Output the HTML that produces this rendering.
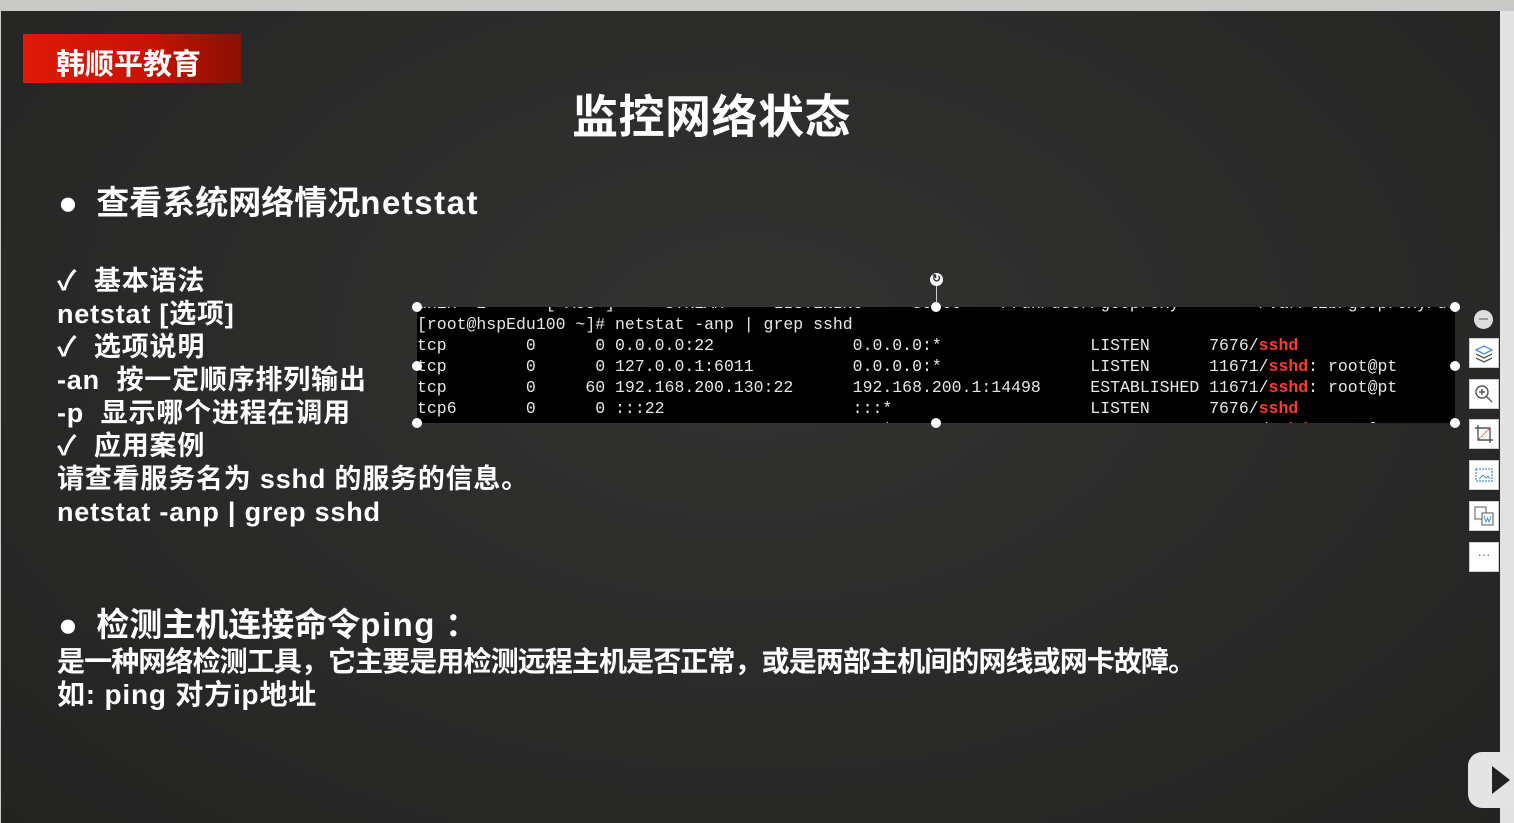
<!DOCTYPE html>
<html><head><meta charset="utf-8"><style>
*{margin:0;padding:0;box-sizing:border-box}
body{width:1514px;height:823px;overflow:hidden;background:#c9cac8;position:relative;font-family:"Liberation Sans","Noto Sans CJK SC",sans-serif;color:#fff;font-weight:bold}
#slide{position:absolute;left:1px;top:11px;width:1499px;height:812px;background:radial-gradient(ellipse at 50% 40%,#333332 0%,#2a2a29 55%,#232322 100%)}
#rs{position:absolute;left:1500px;top:11px;width:14px;height:812px;background:#e2e2e2}
.t{position:absolute;white-space:nowrap;line-height:1}
.l{letter-spacing:0.8px}
#logo{position:absolute;left:23px;top:34px;width:218px;height:49px;background:linear-gradient(90deg,#e01a06 0%,#c51304 60%,#8a1004 100%);font-size:29px;padding:7px 0 0 33px;letter-spacing:0px}
#term{position:absolute;left:417px;top:307px;width:1038px;height:116px;background:#000;font-family:"Liberation Mono",monospace;font-weight:normal;font-size:16.5px;color:#e8e8e8;overflow:hidden}
#term pre{font-family:inherit;position:absolute;left:0;top:7px;line-height:21px}
.r{color:#ff3b2a;font-weight:bold}
.h{position:absolute;width:10px;height:10px;border-radius:50%;background:#fff;}
.btn{position:absolute;left:1469px;width:30px;height:30px;background:#fff;border:1px solid #ccc}
</style></head><body>
<div id="slide"></div><div id="rs"></div>
<div id="logo">韩顺平教育</div>
<div class="t" style="left:572px;top:94px;font-size:46px;letter-spacing:0.5px">监控网络状态</div>
<div class="t" style="left:58px;top:186px;font-size:33px"><span style="letter-spacing:0">●&nbsp;&nbsp;查看系统网络情况</span><span style="letter-spacing:1.5px">netstat</span></div>
<div class="t l" style="left:57px;top:265px;font-size:27px;line-height:33px">
✓&nbsp; 基本语法<br>netstat [选项]<br>✓&nbsp; 选项说明<br>-an&nbsp; 按一定顺序排列输出<br>-p&nbsp; 显示哪个进程在调用<br>✓&nbsp; 应用案例<br>请查看服务名为 sshd 的服务的信息。<br>netstat -anp | grep sshd</div>
<div class="t" style="left:58px;top:608px;font-size:33px">●&nbsp;&nbsp;检测主机连接命令<span style="letter-spacing:1.5px">ping</span> ：</div>
<div class="t" style="left:57px;top:648px;font-size:28px;letter-spacing:-0.9px">是一种网络检测工具，它主要是用检测远程主机是否正常，或是两部主机间的网线或网卡故障。</div>
<div class="t l" style="left:57px;top:681px;font-size:28px">如: ping 对方ip地址</div>
<div id="term"><pre style="top:-14px">unix  2      [ ACC ]     STREAM     LISTENING     30360    /run/user/geoproxy        /var/lib/geoproxy/defau</pre><pre>[root@hspEdu100 ~]# netstat -anp | grep sshd
tcp        0      0 0.0.0.0:22              0.0.0.0:*               LISTEN      7676/<span class="r">sshd</span>
tcp        0      0 127.0.0.1:6011          0.0.0.0:*               LISTEN      11671/<span class="r">sshd</span>: root@pt
tcp        0     60 192.168.200.130:22      192.168.200.1:14498     ESTABLISHED 11671/<span class="r">sshd</span>: root@pt
tcp6       0      0 :::22                   :::*                    LISTEN      7676/<span class="r">sshd</span>
tcp6       0      0 ::1:6011                :::*                    LISTEN      11671/<span class="r">sshd</span>: root@pt</pre></div>
<div class="h" style="left:412px;top:302px"></div><div class="h" style="left:931px;top:302px"></div><div class="h" style="left:1450px;top:302px"></div>
<div class="h" style="left:412px;top:361px"></div><div class="h" style="left:1450px;top:361px"></div>
<div class="h" style="left:412px;top:418px"></div><div class="h" style="left:931px;top:418px"></div><div class="h" style="left:1450px;top:418px"></div>
<div style="position:absolute;left:936px;top:285px;width:1px;height:18px;background:#ccc"></div>
<div style="position:absolute;left:930px;top:273px;width:13px;height:13px;border-radius:50%;background:#fff;color:#333;font-size:11px;text-align:center;line-height:13px">↻</div>
<div style="position:absolute;left:1474px;top:310px;width:19px;height:19px;border-radius:50%;background:#ddd"><div style="position:absolute;left:5px;top:8px;width:9px;height:2px;background:#999"></div></div>
<div class="btn" style="top:338px"><svg width="28" height="28"><path d="M6 11l8-4 8 4-8 4z" fill="none" stroke="#4a8fe0" stroke-width="1.3"/><path d="M6 15l8 4 8-4M6 19l8 4 8-4" fill="none" stroke="#555" stroke-width="1.3"/></svg></div>
<div class="btn" style="top:379px"><svg width="28" height="28"><circle cx="12" cy="12" r="6" fill="none" stroke="#555" stroke-width="1.4"/><path d="M16 16l6 6M12 9v6M9 12h6" stroke="#555" stroke-width="1.4"/></svg></div>
<div class="btn" style="top:419px"><svg width="28" height="28"><path d="M8 5v15h15M5 8h15v15" fill="none" stroke="#555" stroke-width="1.4"/><path d="M9 19L20 8" stroke="#e33" stroke-width="1" stroke-dasharray="2 1"/></svg></div>
<div class="btn" style="top:460px"><svg width="28" height="28"><rect x="6" y="8" width="16" height="12" fill="none" stroke="#4a8fe0" stroke-width="1.3" stroke-dasharray="2 1"/><path d="M9 18l4-4 3 3 2-2 2 3" fill="none" stroke="#4a8fe0"/></svg></div>
<div class="btn" style="top:501px"><svg width="28" height="28"><rect x="5" y="5" width="11" height="12" fill="none" stroke="#555"/><rect x="12" y="11" width="11" height="12" fill="#fff" stroke="#555"/><path d="M14 14l2 6 1.5-4 1.5 4 2-6" fill="none" stroke="#4a8fe0"/></svg></div>
<div class="btn" style="top:542px;color:#666;font-size:13px;text-align:center;line-height:24px;font-weight:normal">···</div>
<div style="position:absolute;left:1468px;top:752px;width:60px;height:56px;border-radius:14px;background:#e4e4e4"></div>
<div style="position:absolute;left:1492px;top:766px;width:0;height:0;border-top:14px solid transparent;border-bottom:14px solid transparent;border-left:18px solid #222"></div>
</body></html>
